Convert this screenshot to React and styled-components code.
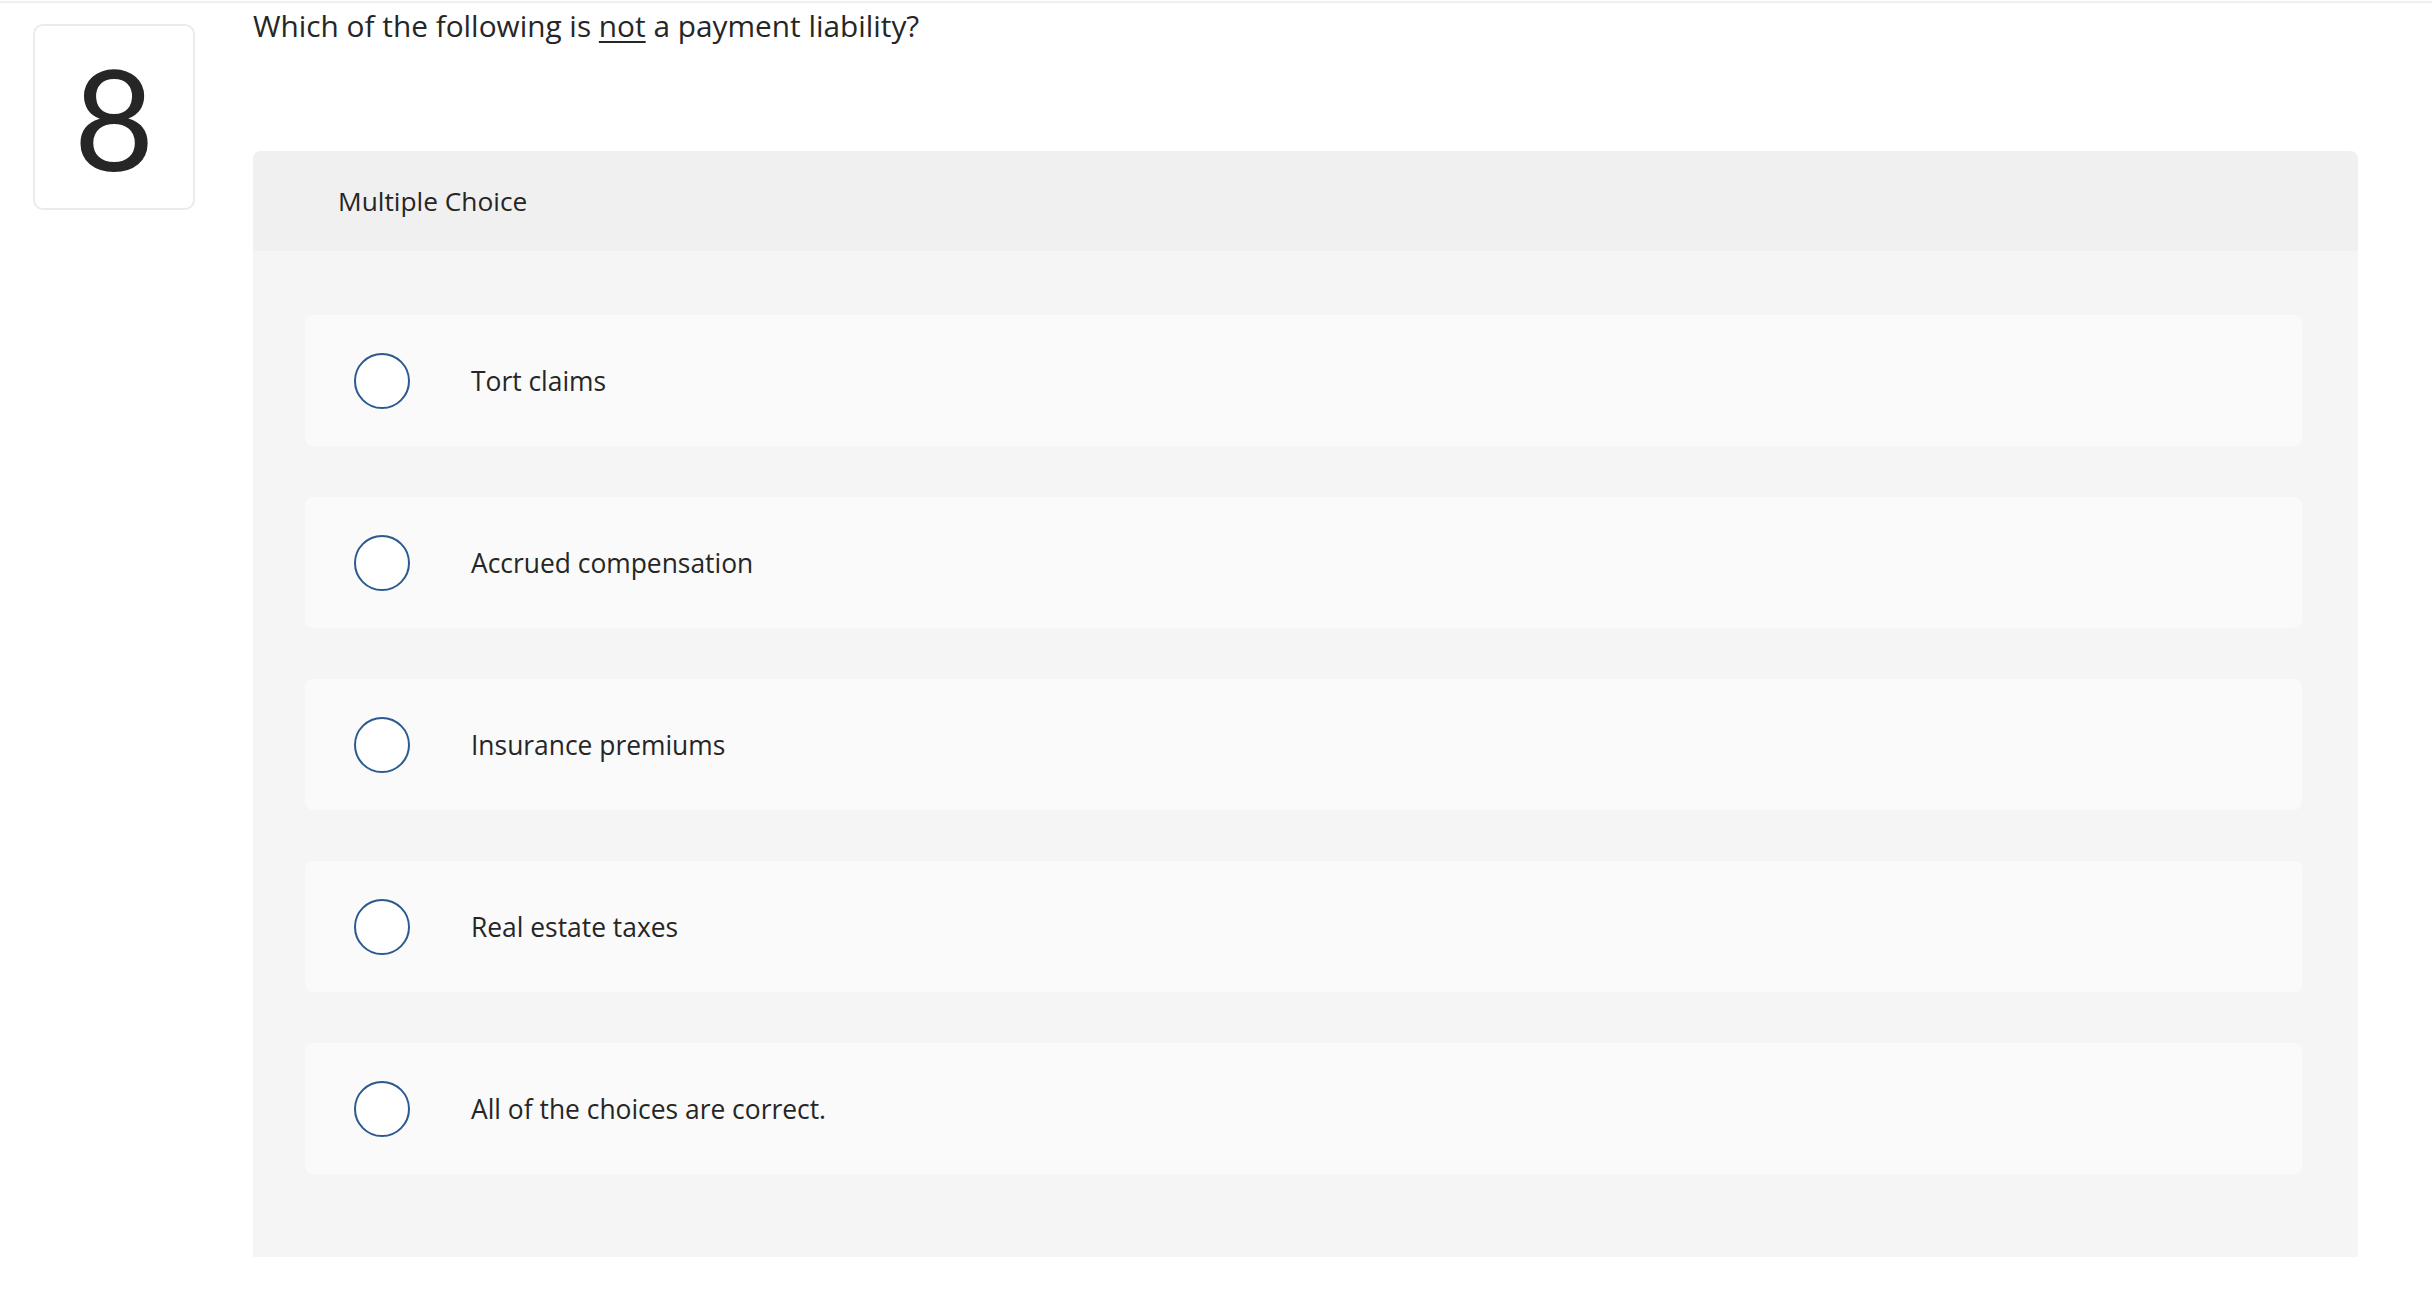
import React from "react";
import styled, { createGlobalStyle } from "styled-components";

const GlobalStyle = createGlobalStyle`
  html, body {
    margin: 0;
    padding: 0;
    background: #ffffff;
  }
  body {
    font-family: "Open Sans", "Liberation Sans", Arial, sans-serif;
    color: #262626;
  }
`;

const TopRule = styled.div`
  height: 2px;
  margin-top: 1px;
  background: #f0f0f0;
`;

const Page = styled.div`
  display: flex;
  align-items: flex-start;
  padding-left: 33px;
`;

const NumberBox = styled.div`
  box-sizing: border-box;
  flex: 0 0 auto;
  width: 162px;
  height: 186px;
  margin-top: 21px;
  border: 2px solid #ebebeb;
  border-radius: 10px;
  display: flex;
  align-items: center;
  justify-content: center;
  font-family: Lato, "Liberation Sans", sans-serif;
  font-size: 139px;
  line-height: 1;
  color: #262626;
`;

const Main = styled.div`
  margin-left: 58px;
  width: 2105px;
`;

const Question = styled.p`
  margin: 4px 0 0;
  font-size: 29.8px;
  line-height: 38px;
  height: 144px;

  u {
    text-decoration-thickness: 2px;
    text-underline-offset: 4px;
  }
`;

const Panel = styled.section`
  border-radius: 8px 8px 0 0;
  overflow: hidden;
  background: #f5f5f5;
`;

const PanelHeader = styled.div`
  height: 100px;
  display: flex;
  align-items: center;
  padding-left: 85px;
  background: #f0f0f0;
  font-size: 26.3px;
`;

const Choices = styled.div`
  display: flex;
  flex-direction: column;
  gap: 51px;
  padding: 64px 56px 83px 52px;
`;

const Choice = styled.label`
  height: 131px;
  display: flex;
  align-items: center;
  gap: 61px;
  padding-left: 49px;
  background: #fafafa;
  border-radius: 8px;
  font-size: 26.4px;
  cursor: pointer;
`;

const Radio = styled.span`
  box-sizing: border-box;
  flex: 0 0 auto;
  width: 56px;
  height: 56px;
  border-radius: 50%;
  border: 2px solid #2a5a8f;
  background: #ffffff;
`;

const choices = [
  "Tort claims",
  "Accrued compensation",
  "Insurance premiums",
  "Real estate taxes",
  "All of the choices are correct.",
];

export default function App() {
  return (
    <>
      <GlobalStyle />
      <TopRule />
      <Page>
        <NumberBox>8</NumberBox>
        <Main>
          <Question>
            Which of the following is <u>not</u> a payment liability?
          </Question>
          <Panel>
            <PanelHeader>Multiple Choice</PanelHeader>
            <Choices>
              {choices.map((c) => (
                <Choice key={c}>
                  <Radio />
                  {c}
                </Choice>
              ))}
            </Choices>
          </Panel>
        </Main>
      </Page>
    </>
  );
}
